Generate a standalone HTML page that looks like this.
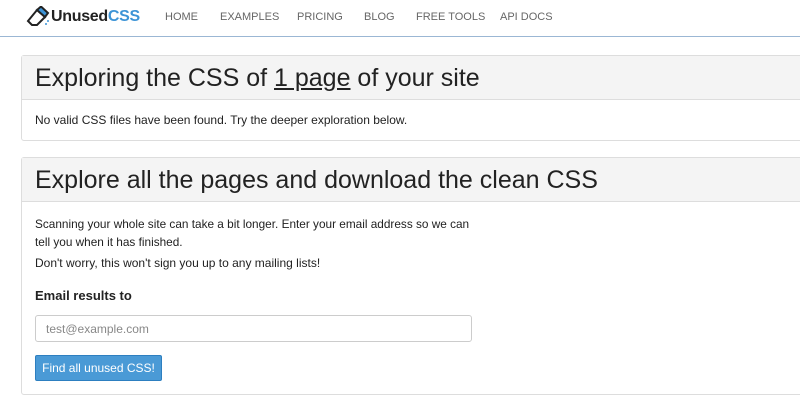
<!DOCTYPE html>
<html><head><style>
*{margin:0;padding:0;box-sizing:border-box}
body{width:800px;height:414px;background:#fff;font-family:"Liberation Sans",sans-serif;color:#222;position:relative;overflow:hidden}
.hdr{position:absolute;left:0;top:0;width:800px;height:37px;border-bottom:1px solid #9bb7d4}
.logo{position:absolute;left:26px;top:6px}
.brand{position:absolute;left:51px;top:8px;font-size:16px;font-weight:bold;color:#222;letter-spacing:-.3px}
.brand span{color:#3d94d6}
.nav{position:absolute;top:11px;font-size:11px;color:#666}
.panel{position:absolute;left:21px;width:800px;border:1px solid #ddd;border-radius:3px;background:#fff}
.ph{background:#f4f4f4;border-bottom:1px solid #ddd;height:44px;padding-left:13px;font-size:25px;line-height:44px;color:#222}
.p{position:absolute;left:13px;font-size:12px;color:#222}
</style></head><body>
<div class="hdr">
<svg class="logo" width="24" height="22" viewBox="0 0 24 22"><path d="M2 15 L11 4 L19 11 L11 19 L6 19 Z" fill="#fff" stroke="#222" stroke-width="2"/><path d="M11 4 L15 0.5 L22 7 L19 11 Z" fill="#3d94d6" stroke="#222" stroke-width="2"/><circle cx="20" cy="18" r="1" fill="#3d94d6"/><circle cx="22" cy="15" r="1" fill="#3d94d6"/></svg>
<div class="brand">Unused<span>CSS</span></div>
<div class="nav" style="left:165px">HOME</div>
<div class="nav" style="left:220px">EXAMPLES</div>
<div class="nav" style="left:297px">PRICING</div>
<div class="nav" style="left:364px">BLOG</div>
<div class="nav" style="left:416px">FREE TOOLS</div>
<div class="nav" style="left:500px">API DOCS</div>
</div>
<div class="panel" style="top:55px;height:86px">
<div class="ph">Exploring the CSS of <u>1 page</u> of your site</div>
<div class="p" style="top:57px">No valid CSS files have been found. Try the deeper exploration below.</div>
</div>
<div class="panel" style="top:157px;height:238px">
<div class="ph">Explore all the pages and download the clean CSS</div>
<div class="p" style="top:57px;line-height:18px;font-size:11.8px">Scanning your whole site can take a bit longer. Enter your email address so we can<br>tell you when it has finished.</div>
<div class="p" style="top:98px">Don't worry, this won't sign you up to any mailing lists!</div>
<div class="p" style="top:130px;font-size:13px;font-weight:bold">Email results to</div>
<div style="position:absolute;left:13px;top:157px;width:437px;height:27px;border:1px solid #ccc;border-radius:3px;font-size:12px;color:#888;padding:6px 10px">test@example.com</div>
<div style="position:absolute;left:13px;top:197px;width:127px;height:26px;background:#4a9ad6;border:1px solid #2d7fc0;border-radius:2px;font-size:12px;color:#fff;line-height:24px;text-align:center">Find all unused CSS!</div>
</div>
</body></html>
